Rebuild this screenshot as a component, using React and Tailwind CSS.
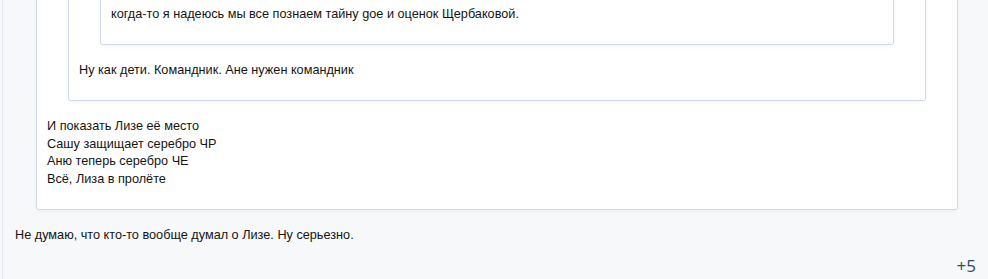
import React from "react";

const FONT = { fontFamily: '"Liberation Sans", Arial, sans-serif' };

function Quote({ children, className = "" }) {
  return (
    <div
      className={
        "bg-white border border-[#cfd9ea] rounded-[3px] shadow-[0_2px_4px_rgba(0,0,0,0.04)] px-[10px] " +
        className
      }
    >
      {children}
    </div>
  );
}

export default function App() {
  return (
    <div
      className="w-[988px] h-[279px] overflow-hidden bg-[#f7f8fa] text-[12.7px] leading-[17.5px] text-[#141414]"
      style={FONT}
    >
      <div className="flow-root ml-[2px] h-full border-l border-[#e4e9f3] pl-[33px] pr-[30px]">
        {/* цитата верхнего уровня, обрезана сверху */}
        <Quote className="-mt-[80px] pt-0 pb-[21px]">
          <Quote className="ml-[21px] mr-[21px] pt-0 pb-[21px]">
            <Quote className="ml-[21px] mr-[21px] pt-[83px] pb-5">
              <p>когда-то я надеюсь мы все познаем тайну goe и оценок Щербаковой.</p>
            </Quote>
            <p className="pt-[17px]">Ну как дети. Командник. Ане нужен командник</p>
          </Quote>
          <div className="pt-[17px]">
            <p>И показать Лизе её место</p>
            <p>Сашу защищает серебро ЧР</p>
            <p>Аню теперь серебро ЧЕ</p>
            <p>Всё, Лиза в пролёте</p>
          </div>
        </Quote>
        <p className="-ml-[21px] pt-[17px]">Не думаю, что кто-то вообще думал о Лизе. Ну серьезно.</p>
        <div className="flex justify-end -mr-[18px] pt-[10px]">
          <span
            className="text-[17px] leading-[22px] text-[#2f4b63]"
            style={{ fontFamily: '"Open Sans", "DejaVu Sans", sans-serif' }}
          >
            +5
          </span>
        </div>
      </div>
    </div>
  );
}
